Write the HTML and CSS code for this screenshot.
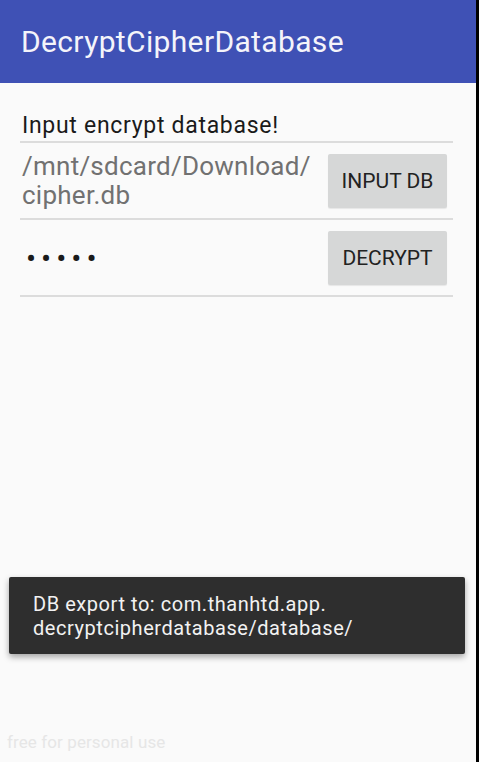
FILE: index.html
```html
<!DOCTYPE html>
<html lang="en">

<head>
    <meta charset="UTF-8">
    <meta name="viewport" content="width=device-width, initial-scale=1.0">
    <title>DecryptCipherDatabase</title>
    <link rel="stylesheet" href="styles.css">
</head>

<body>
    <div class="screen">
        <div class="toolbar">
            <h1>DecryptCipherDatabase</h1>
        </div>
        <div class="content">
            <div class="field label-field">
                <span class="label">Input encrypt database!</span>
            </div>
            <div class="row">
                <div class="field grow">
                    <span class="path">/mnt/sdcard/Download/<br>cipher.db</span>
                </div>
                <button class="btn">INPUT DB</button>
            </div>
            <div class="row">
                <div class="field grow">
                    <span class="password">•••••</span>
                </div>
                <button class="btn">DECRYPT</button>
            </div>
        </div>

        <div class="toast">
            <p>DB export to: com.thanhtd.app.<br>decryptcipherdatabase/database/</p>
        </div>
        <div class="watermark">free for personal use</div>
    </div>
</body>
</html>
```

FILE: styles.css
```css
/* Global styles */
* {
    box-sizing: border-box;
    margin: 0;
    padding: 0;
}

body {
    background-color: #000;
    font-family: Roboto, "Noto Sans", sans-serif;
    width: 479px;
    height: 762px;
    overflow: hidden;
}

.screen {
    position: relative;
    width: 476px;
    height: 762px;
    background-color: #fafafa;
}

/* Toolbar */
.toolbar {
    height: 83px;
    background-color: #3f51b5;
    display: flex;
    align-items: center;
    padding-left: 21px;
}

.toolbar h1 {
    color: #f4f4fa;
    font-size: 30px;
    letter-spacing: 0.35px;
    font-weight: 400;
    margin-top: -1px;
}

/* Content */
.content {
    padding: 30px 23px 0 20px;
}

.field {
    border-bottom: 2px solid #dcdcdc;
    padding-left: 2px;
}

.label-field {
    height: 30px;
}

.label {
    display: block;
    font-size: 23px;
    letter-spacing: 0.7px;
    line-height: 26px;
    color: #1a1a1a;
}

.row {
    display: flex;
    align-items: center;
    height: 77px;
    border-bottom: 2px solid #dcdcdc;
}

.row .field {
    border-bottom: none;
}

.grow {
    flex: 1;
}

.path {
    display: block;
    font-size: 26px;
    letter-spacing: 0.25px;
    line-height: 29px;
    color: #717171;
}

.password {
    display: block;
    font-size: 30px;
    letter-spacing: 5px;
    color: #1a1a1a;
    padding-left: 4px;
    margin-top: 2px;
}

.btn {
    width: 119px;
    height: 54px;
    margin-right: 6px;
    background-color: #d6d7d7;
    border: none;
    border-radius: 2px;
    font-family: Roboto, sans-serif;
    font-size: 21px;
    color: #222;
    box-shadow: 0 1px 1px rgba(0, 0, 0, 0.08);
}

/* Toast overlay */
.toast {
    position: absolute;
    left: 9px;
    top: 577px;
    width: 456px;
    height: 77px;
    background-color: #2e2e2e;
    border-radius: 2px;
    box-shadow: 0 3px 6px rgba(0, 0, 0, 0.35);
    padding: 15px 24px;
}

.toast p {
    color: #f2f2f2;
    font-size: 20px;
    letter-spacing: 0.55px;
    line-height: 24px;
}

.watermark {
    position: absolute;
    left: 7px;
    top: 732px;
    font-size: 17px;
    letter-spacing: 0.1px;
    color: #e6e6e6;
}
```
